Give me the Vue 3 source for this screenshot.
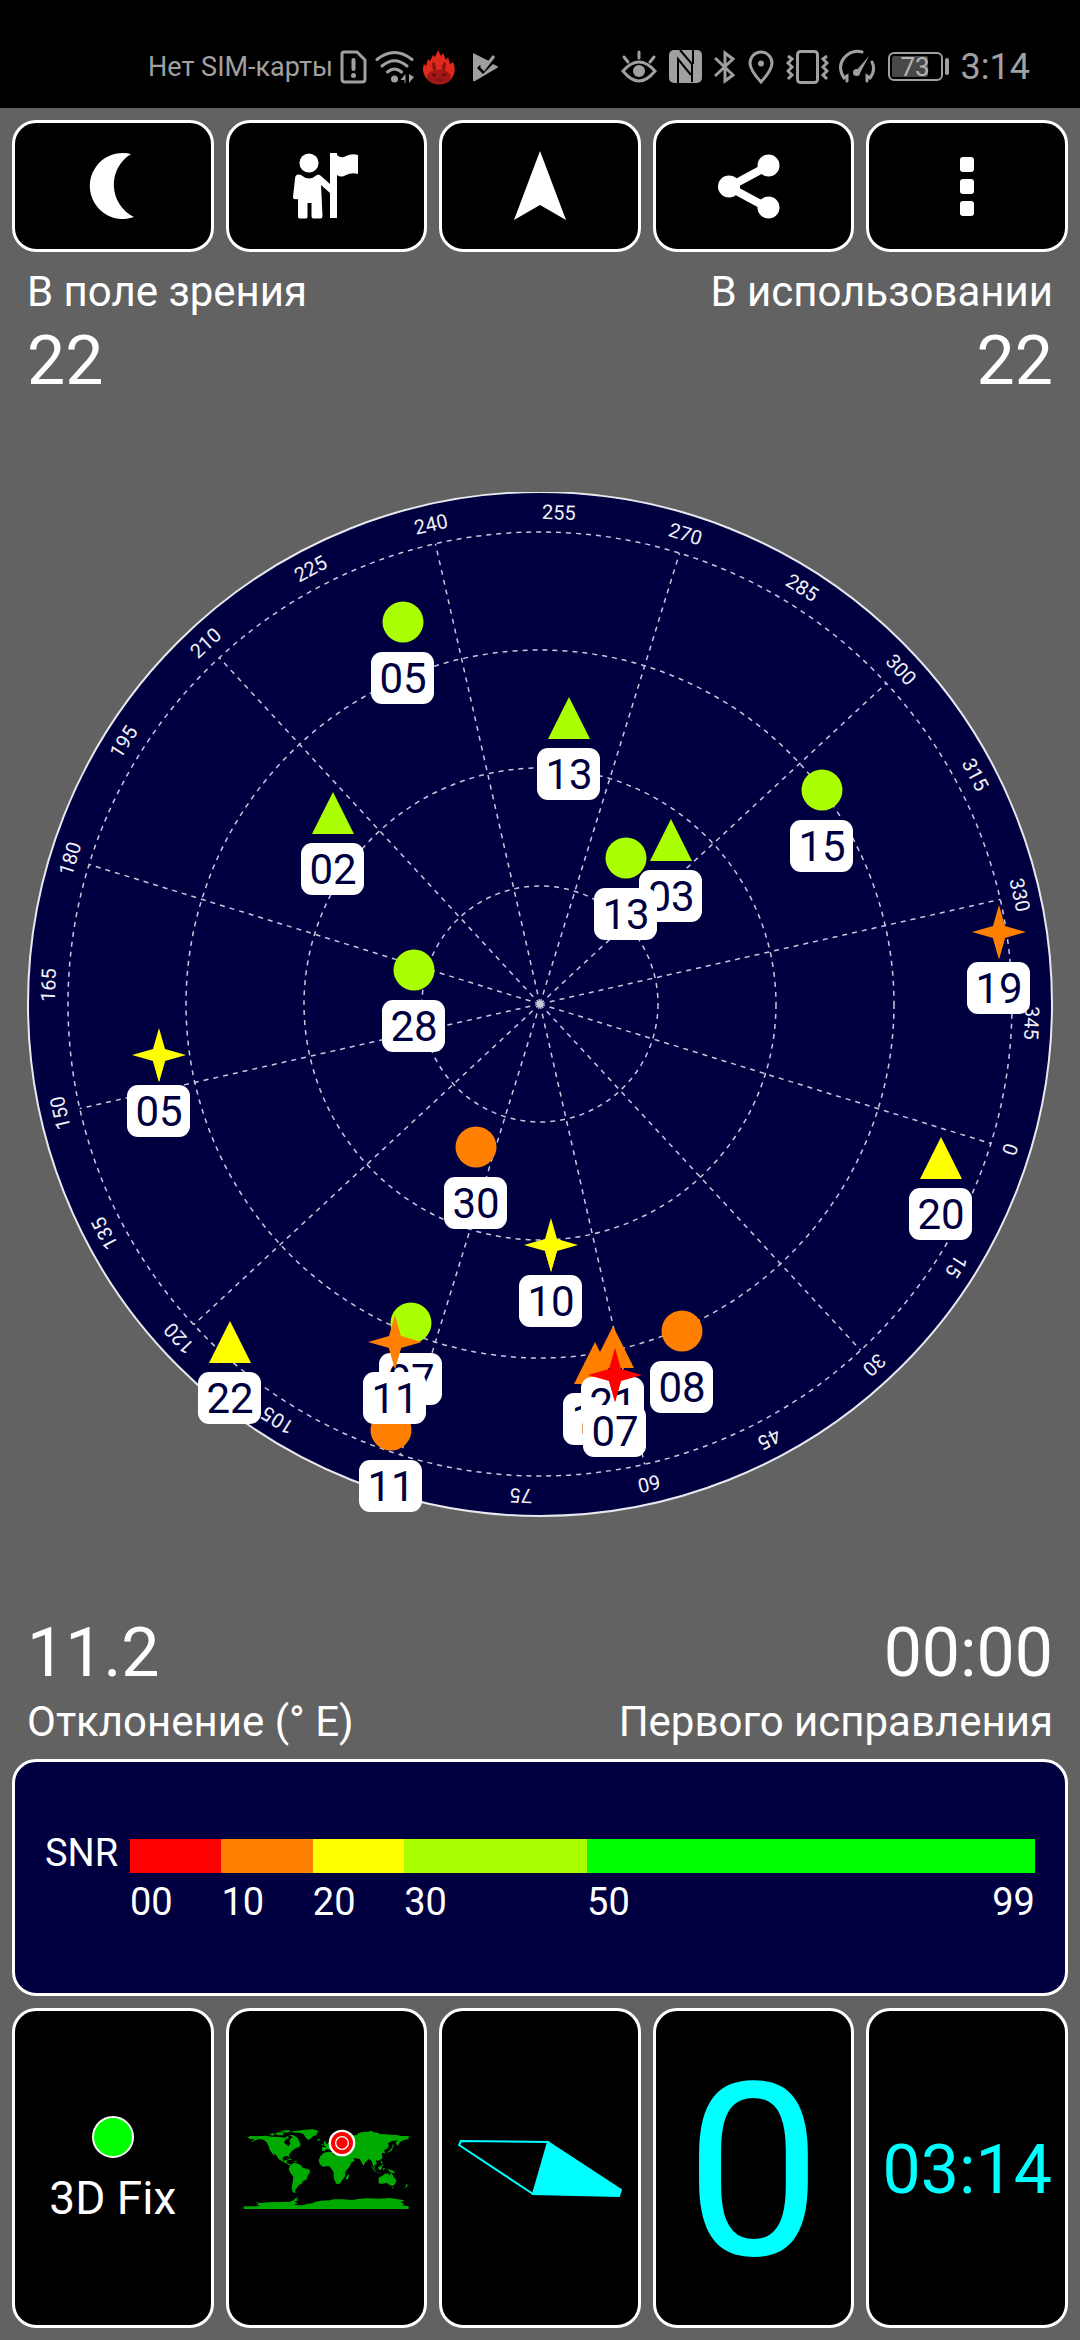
<script setup>
const bearing = 107.2
const centre = { x: 540, y: 512 }
const rings = [118, 236, 354, 472]

const rad = (deg) => (deg * Math.PI) / 180
const spokes = Array.from({ length: 12 }, (_, i) => {
  const a = rad(i * 30 + bearing)
  return { x: centre.x + 472 * Math.sin(a), y: centre.y - 472 * Math.cos(a) }
})
const degrees = Array.from({ length: 24 }, (_, i) => i * 15)

const lime = '#aaff00'
const orange = '#ff8000'
const yellow = '#ffff00'
const red = '#ff0000'

const satellites = [
  { id: '05', shape: 'circle', color: lime, x: 403, y: 130 },
  { id: '02', shape: 'triangle', color: lime, x: 333, y: 321 },
  { id: '28', shape: 'circle', color: lime, x: 414, y: 478 },
  { id: '13', shape: 'triangle', color: lime, x: 569, y: 226 },
  { id: '03', shape: 'triangle', color: lime, x: 671, y: 348 },
  { id: '13', shape: 'circle', color: lime, x: 626, y: 366 },
  { id: '15', shape: 'circle', color: lime, x: 822, y: 298 },
  { id: '19', shape: 'star', color: orange, x: 999, y: 440 },
  { id: '05', shape: 'star', color: yellow, x: 159, y: 563 },
  { id: '30', shape: 'circle', color: orange, x: 476, y: 655 },
  { id: '10', shape: 'star', color: yellow, x: 551, y: 753 },
  { id: '20', shape: 'triangle', color: yellow, x: 941, y: 666 },
  { id: '22', shape: 'triangle', color: yellow, x: 230, y: 850 },
  { id: '11', shape: 'circle', color: orange, x: 391, y: 938 },
  { id: '07', shape: 'circle', color: lime, x: 411, y: 831 },
  { id: '11', shape: 'star', color: orange, x: 395, y: 850 },
  { id: '08', shape: 'circle', color: orange, x: 682, y: 839 },
  { id: '14', shape: 'triangle', color: orange, x: 595, y: 871 },
  { id: '21', shape: 'triangle', color: orange, x: 613, y: 855 },
  { id: '07', shape: 'star', color: red, x: 615, y: 883 }
]

const snr = [
  { from: '00', color: red },
  { from: '10', color: orange },
  { from: '20', color: yellow },
  { from: '30', color: lime },
  { from: '50', to: '99', color: '#00ff00' }
]
</script>

<template>
  <div class="page">
    <header class="status">
      <div class="status-left">
        <span>Нет SIM-карты</span>
        <svg width="28" height="36" viewBox="0 0 28 36" fill="none" stroke="currentColor">
          <path d="M4 3h13l8 8v19q0 3-3 3H5q-3 0-3-3V5q0-2 2-2z" stroke-width="3" />
          <path d="M13.500 11v9" stroke-width="4" stroke-linecap="round" />
          <circle cx="13.500" cy="26.500" r="2.500" fill="currentColor" stroke="none" />
        </svg>
        <svg width="40" height="36" viewBox="0 0 40 36" fill="none" stroke="currentColor" stroke-width="3" stroke-linecap="round">
          <path d="M2 10.500Q19.500-3.500 37 10.500" />
          <path d="M7 17Q19.500 6.500 32 17" />
          <path d="M12.500 23Q19.500 17 26.500 23" />
          <circle cx="19.500" cy="30" r="3.500" fill="currentColor" stroke="none" />
          <path d="M30.500 25v9h-1v-3h-4zM34 25v9l5-6z" fill="currentColor" stroke="none" />
        </svg>
        <svg width="34" height="36" viewBox="0 0 34 36">
          <path d="M5 30Q-1 23 2 15l2 2 2-7 2 2 3-6 2 2 3-7 3 6 2-3 3 7 2-3 2 7 3-2q4 9-1 16-4 6-12 6T5 30z" fill="#e0281c" />
          <ellipse cx="17" cy="28" rx="12" ry="7.500" fill="#a01714" />
          <path d="M11 13q-2 1 0 8h3q0-8-3-8zM23 13q2 1 0 8h-3q0-8 3-8z" fill="#8a1512" />
          <path d="M10 25q3-1 4 2-3 1-4-2zM24 25q-3-1-4 2 3 1 4-2zM14 31h6" fill="#6a0f0d" stroke="#6a0f0d" />
        </svg>
        <svg class="task" width="28" height="36" viewBox="0 0 28 36">
          <path d="M2 4v27q0 2 2 1l22-13q2-1 0-2l-4-2-10 10-6-6 3-3 3 3 6-7z" fill="currentColor" />
          <path d="M10 17l3 3L23 7" fill="none" stroke="currentColor" stroke-width="3" />
        </svg>
      </div>
      <div class="status-right">
        <svg width="36" height="36" viewBox="0 0 36 36" fill="none" stroke="currentColor" stroke-width="3" stroke-linecap="round">
          <path d="M2 22Q18 4 34 22 18 42 2 22zM18 3v6M3 8l4 5M33 8l-4 5" />
          <circle cx="18" cy="22" r="6" fill="currentColor" stroke="none" />
        </svg>
        <svg width="33" height="36" viewBox="0 0 33 36">
          <rect y="1" width="33" height="33" rx="5" fill="currentColor" />
          <path d="M9 34V10l13 16M11 1l12 14v18M24 1v14" fill="none" stroke="#000" stroke-width="2" />
        </svg>
        <svg width="22" height="36" viewBox="0 0 22 36" fill="none" stroke="currentColor" stroke-width="3">
          <path d="M1 9l18 17-8 6V4l8 6L1 27" />
        </svg>
        <svg width="26" height="36" viewBox="0 0 26 36" fill="none" stroke="currentColor" stroke-width="3">
          <path d="M13 33Q2 21 2 14a11 11 0 0 1 22 0q0 7-11 19z" />
          <circle cx="13" cy="14.500" r="3" fill="currentColor" stroke="none" />
        </svg>
        <svg class="vibrate" width="43" height="36" viewBox="0 0 43 36" fill="none" stroke="currentColor" stroke-width="3">
          <rect x="11.500" y="2.500" width="20" height="31" rx="3" />
          <path d="M2 7l4 3-4 4 4 4-4 4 4 4-4 4M41 7l-4 3 4 4-4 4 4 4-4 4 4 4" />
        </svg>
        <svg width="38" height="36" viewBox="0 0 38 36" fill="none" stroke="currentColor" stroke-width="3" stroke-linecap="round">
          <path d="M9 32v-5l-3 2Q-1 18 6 9 14 0 24 3M34 13q4 8-2 16l-3-2v5" />
          <path d="M31 7L21 26q-3 1-4-3z" fill="currentColor" stroke="none" />
          <circle cx="18.500" cy="23.500" r="3.500" fill="currentColor" stroke="none" />
        </svg>
        <svg width="61" height="36" viewBox="0 0 61 36">
          <rect x="1" y="4" width="53" height="27" rx="5" fill="none" stroke="currentColor" stroke-width="2" />
          <rect x="4" y="7" width="36" height="21" rx="2" fill="#484848" />
          <rect x="57" y="9" width="4" height="17" rx="2" fill="currentColor" />
          <text class="charge" x="27" y="27" text-anchor="middle">73</text>
        </svg>
        <span class="clock">3:14</span>
      </div>
    </header>

    <nav class="row toolbar">
      <button class="tile" type="button" aria-label="Ночной режим">
        <svg class="icon" viewBox="-34 -34 68 68">
          <path d="M18-32A33 33 0 1 0 21 31A36 36 0 0 1 18-32z" />
        </svg>
      </button>
      <button class="tile" type="button" aria-label="Путевые точки">
        <svg class="icon" viewBox="-34 -34 68 68">
          <circle cx="-17" cy="-23" r="9.600" />
          <path d="M4-33h7v2q4 4 9 1 6-3 12-1v19q-6-2-12 1-5 3-9 0v43H4V7L-5-1l1.500 31q0 2.500-2 2.500h-7q-2 0-2-2V17h-4v14q0 1.500-2 1.500h-6q-1.500 0-1.500-2V13q-5 1-5-2l2-18q0-6 6-4 8 7 16 0 2-1 4 1L4-2z" />
        </svg>
      </button>
      <button class="tile" type="button" aria-label="Навигация">
        <svg class="icon arrow" viewBox="-34 -36 68 72">
          <path d="M0-35L26 34 0 19-26 34z" />
        </svg>
      </button>
      <button class="tile" type="button" aria-label="Поделиться">
        <svg class="icon share" viewBox="-36 -34 72 68">
          <path d="M14-20L-25 1 14 22" fill="none" stroke="#fff" stroke-width="8" />
          <circle cx="14.500" cy="-20.500" r="11" />
          <circle cx="14.500" cy="21.500" r="11" />
          <circle cx="-25" cy="0.500" r="11" />
        </svg>
      </button>
      <button class="tile" type="button" aria-label="Меню">
        <svg class="icon" viewBox="-34 -34 68 68">
          <rect x="-7" y="-29" width="14" height="15" rx="3" />
          <rect x="-7" y="-7" width="14" height="15" rx="3" />
          <rect x="-7" y="15" width="14" height="15" rx="3" />
        </svg>
      </button>
    </nav>

    <section class="stats top">
      <div>
        <div class="label">В поле зрения</div>
        <div class="value">22</div>
      </div>
      <div class="end">
        <div class="label">В использовании</div>
        <div class="value">22</div>
      </div>
    </section>

    <main class="sky">
      <svg viewBox="0 0 1080 1030">
        <circle class="disc" :cx="centre.x" :cy="centre.y" r="512" />
        <g class="grid">
          <circle v-for="r in rings" :key="r" :cx="centre.x" :cy="centre.y" :r="r" />
          <line v-for="(s, i) in spokes" :key="'s' + i" :x1="centre.x" :y1="centre.y" :x2="s.x" :y2="s.y" />
        </g>
        <circle class="zenith" :cx="centre.x" :cy="centre.y" r="3" />
        <g class="degrees">
          <text
            v-for="d in degrees"
            :key="d"
            text-anchor="middle"
            :x="centre.x"
            :y="centre.y - 485"
            :transform="`rotate(${d + bearing} ${centre.x} ${centre.y})`"
          >{{ d }}</text>
        </g>
        <g v-for="(s, i) in satellites" :key="'m' + i" :transform="`translate(${s.x} ${s.y})`">
          <circle v-if="s.shape === 'circle'" r="20.500" :fill="s.color" />
          <path v-else-if="s.shape === 'triangle'" d="M0-21L21 21H-21z" :fill="s.color" />
          <path v-else d="M0-27L6-6 27 0 6 6 0 27-6 6-27 0-6-6z" :fill="s.color" />
          <rect x="-32" y="30" width="63" height="52" rx="11" fill="#fff" />
          <path v-if="s.shape === 'star'" d="M0 27L-6 6H6z" :fill="s.color" />
          <text class="sat" x="0" y="71" text-anchor="middle">{{ s.id }}</text>
        </g>
      </svg>
    </main>

    <section class="stats bottom">
      <div>
        <div class="value">11.2</div>
        <div class="label">Отклонение (° E)</div>
      </div>
      <div class="end">
        <div class="value">00:00</div>
        <div class="label">Первого исправления</div>
      </div>
    </section>

    <section class="snr">
      <span class="snr-name">SNR</span>
      <div class="scale">
        <div v-for="s in snr" :key="s.from" class="step">
          <div class="band" :style="{ background: s.color }"></div>
          <div class="marks">
            <span>{{ s.from }}</span>
            <span v-if="s.to">{{ s.to }}</span>
          </div>
        </div>
      </div>
    </section>

    <footer class="row panels">
      <button class="tile fix" type="button">
        <span class="lamp"></span>
        <span>3D Fix</span>
      </button>
      <button class="tile" type="button" aria-label="Карта">
        <svg class="map" viewBox="40 86 498 242">
          <g fill="#00aa00">
            <path d="M42 109L57 110 60 106 75 108 95 107 110 106 125 109 150 110 165 112 174 107 178 112 169 117 163 126 168 132 176 138 182 130 179 119 188 111 197 113 203 123 213 134 208 141 199 143 190 149 182 157 178 164 182 174 176 168 164 168 158 174 161 181 172 179 171 187 181 191 184 197 174 192 158 183 147 177 141 166 133 158 134 168 127 158 120 149 117 138 111 126 101 118 90 116 77 120 62 126 74 117 60 116 54 111z" />
            <path d="M183 93L200 91 225 88 250 87 266 91 260 104 250 108 243 115 236 119 228 112 222 102 210 97 195 97z" />
            <path d="M118 102L130 99 137 102 128 106zM136 98L150 96 165 97 158 105 144 105zM148 92L175 89 184 92 172 97zM178 103L192 105 205 114 209 124 215 134 204 127 198 119 188 110zM262 117L270 115 272 119 264 121zM168 174L182 175 189 180 177 178zM190 182L205 184 196 186z" />
            <path d="M187 190L195 187 210 192 220 202 240 208 241 216 233 228 232 236 220 243 216 250 208 254 202 262 196 270 198 278 189 276 186 262 189 245 191 229 182 217 177 206 181 196z" />
            <path d="M283 157L297 154 309 155 312 163 330 163 346 165 351 179 358 188 365 187 359 200 348 213 346 228 338 240 329 251 320 251 313 236 312 216 305 205 298 197 280 199 270 191 267 180 272 168zM352 226L358 220 357 233 352 239 348 235z" />
            <path d="M277 151L278 140 289 140 285 134 296 128 305 122 303 114 315 103 330 97 347 100 362 106 380 104 387 98 400 95 416 94 425 91 432 96 444 97 452 101 470 102 482 103 500 104 516 107 537 107 537 117 524 118 511 125 504 137 498 127 504 120 488 122 475 129 478 138 472 145 463 150 467 159 458 157 456 163 459 172 450 180 438 181 442 190 434 195 437 207 430 196 426 182 417 176 406 187 402 197 396 186 390 176 371 173 375 181 362 189 353 185 342 165 346 157 330 155 321 149 311 155 300 148 290 147 283 153zM282 127L286 121 291 135 282 138 284 131zM275 132L280 130 279 136z" />
            <path d="M422 196L430 202 440 214 435 213zM445 201L456 194 457 207 449 210zM438 215L456 219 448 219zM460 203L466 202 462 212zM472 206L488 210 498 219 484 217zM453 180L458 184 459 191 454 187zM458 191L463 197 457 196zM472 156L481 150 488 141 489 131 493 135 486 151 476 156z" />
            <path d="M447 232L458 226 466 220 476 219 479 226 484 217 489 223 492 230 500 240 497 250 490 257 480 254 470 247 456 251 447 249zM487 261L492 260 489 265zM529 251L535 254 531 260 520 268 528 260z" />
            <path d="M42 327V318H82L90 316 80 312 88 311 75 306 95 308 115 306 150 305 180 304 192 300 198 293 208 289 200 296 207 299 194 304 205 308 192 314 220 315 232 310 250 309 257 304 275 301 300 300 312 297 340 297 370 299 384 296 410 294 450 295 480 293 515 298 525 301 512 306 524 310 517 315 537 318V327z" />
          </g>
          <circle cx="337" cy="128" r="40" fill="#fff" />
          <circle cx="337" cy="128" r="33" fill="#f00" />
          <circle cx="337" cy="128" r="19" fill="#f00" stroke="#fff" stroke-width="4" />
        </svg>
      </button>
      <button class="tile" type="button" aria-label="Компас">
        <svg class="needle" viewBox="0 0 166 60">
          <path d="M76 56L91 4 164 52 162 58z" fill="#0ff" />
          <path d="M4 3L2 7 76 56 91 4zM76 56L91 4 164 52 162 58z" fill="none" stroke="#0ff" stroke-width="2" />
        </svg>
      </button>
      <button class="tile speed" type="button">0</button>
      <button class="tile time" type="button">03:14</button>
    </footer>
  </div>
</template>

<style>
body {
  margin: 0;
  background: #626262;
}
</style>

<style scoped>
.page {
  box-sizing: border-box;
  display: flex;
  flex-direction: column;
  min-height: 100vh;
  padding-bottom: 12px;
  background: #626262;
  color: #fff;
  font-family: Roboto, "Noto Sans", sans-serif;
}

.status {
  box-sizing: border-box;
  display: flex;
  justify-content: space-between;
  height: 108px;
  padding: 25px 50px 0 148px;
  background: #000;
  color: #a0a0a0;
  font-size: 27px;
}

.status-left,
.status-right {
  display: flex;
  align-items: center;
}

.status-left {
  gap: 7px;
}

.status-right {
  gap: 12px;
}

.task {
  margin-left: 8px;
}

.vibrate {
  margin-right: -3px;
}

.charge {
  fill: #b4b4b4;
  font-size: 26px;
}

.clock {
  font-size: 36px;
}

.row {
  display: grid;
  grid-template-columns: repeat(5, 1fr);
  gap: 12px;
  padding: 12px 12px 0;
}

.tile {
  box-sizing: border-box;
  display: flex;
  align-items: center;
  justify-content: center;
  min-width: 0;
  margin: 0;
  padding: 0;
  border: 3px solid #fff;
  border-radius: 24px;
  background: #000;
  color: #fff;
  font-family: inherit;
  line-height: 1;
}

.toolbar .tile {
  height: 132px;
}

.icon {
  width: 68px;
  height: 68px;
  fill: #fff;
}

.arrow {
  height: 72px;
}

.share {
  width: 72px;
}

.stats {
  display: flex;
  justify-content: space-between;
  padding: 0 27px;
}

.stats > div {
  display: flex;
  flex-direction: column;
  gap: 4px;
}

.top {
  padding-top: 16px;
}

.bottom {
  padding-bottom: 13px;
}

.end {
  text-align: right;
}

.label {
  font-size: 42px;
  line-height: 48px;
}

.value {
  font-size: 68px;
  line-height: 82px;
}

.sky {
  display: flex;
  flex: 1;
  align-items: center;
}

.sky svg {
  display: block;
  width: 100%;
}

.disc {
  fill: #000040;
  stroke: #e8e8f0;
  stroke-width: 2;
}

.grid {
  fill: none;
  stroke: #c8c8dc;
  stroke-width: 1.500;
  stroke-dasharray: 5 5;
}

.zenith {
  fill: #c8c8dc;
}

.degrees {
  fill: #f0f0f8;
  font-size: 20px;
}

.sat {
  fill: #000040;
  font-size: 42px;
}

.snr {
  box-sizing: border-box;
  display: grid;
  grid-template-columns: 85px 1fr;
  height: 237px;
  margin: 0 12px;
  padding: 77px 30px 0;
  border: 3px solid #fff;
  border-radius: 24px;
  background: #000040;
  font-size: 38px;
}

.snr-name {
  line-height: 28px;
}

.scale {
  display: grid;
  grid-template-columns: 10fr 10fr 10fr 20fr 49fr;
}

.band {
  height: 34px;
}

.marks {
  display: flex;
  justify-content: space-between;
  margin-top: 9px;
  line-height: 40px;
}

.panels .tile {
  height: 320px;
}

.panels .fix {
  flex-direction: column;
  gap: 12px;
  padding-top: 6px;
  font-size: 46px;
  line-height: 56px;
}

.lamp {
  box-sizing: border-box;
  width: 42px;
  height: 42px;
  border: 2px solid #fff;
  border-radius: 50%;
  background: #0f0;
}

.map,
.needle {
  width: 166px;
}

.map {
  margin-top: 2px;
}

.speed,
.time {
  color: #0ff;
}

.speed {
  padding-top: 8px;
  font-size: 242px;
}

.time {
  padding-top: 4px;
  font-size: 68px;
}
</style>
